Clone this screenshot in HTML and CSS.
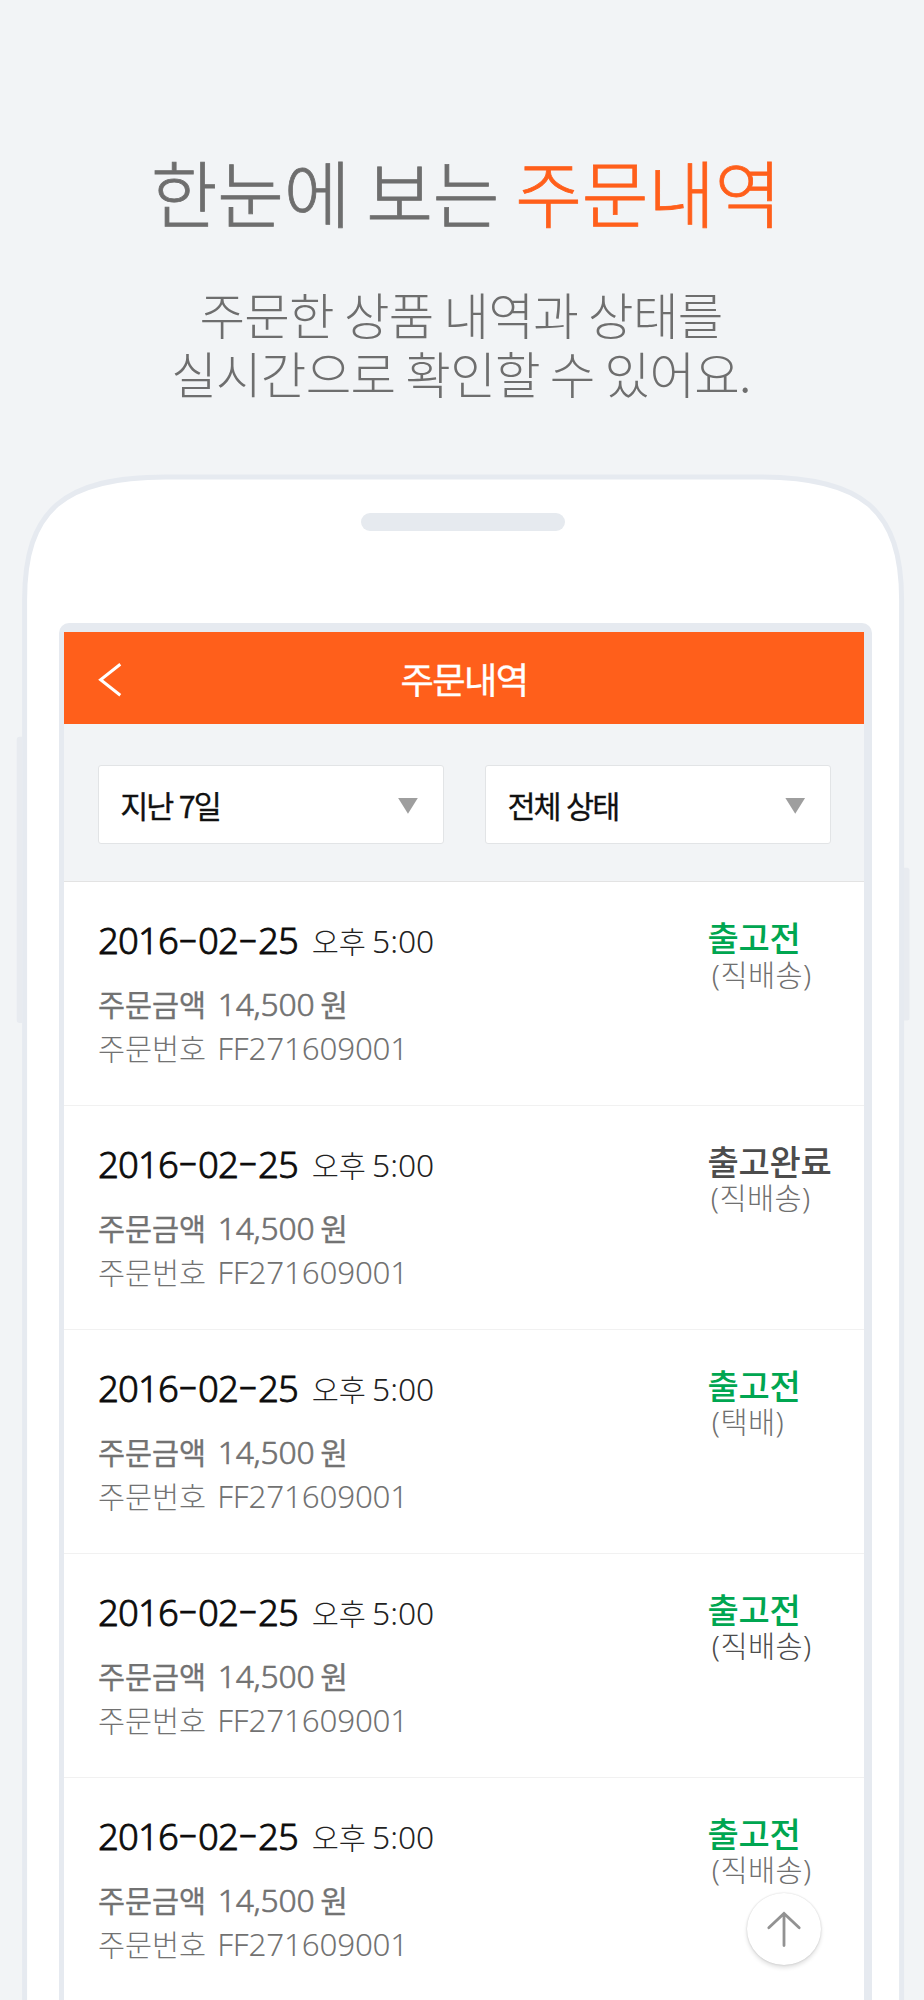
FILE: index.html
```
<!DOCTYPE html>
<html lang="ko">
<head>
<meta charset="utf-8">
<title>주문내역</title>
<link rel="stylesheet" href="styles.css">
</head>
<body>
<main class="page">
  <header class="intro">
    <h1 class="headline">한눈에 보는 <em>주문내역</em></h1>
    <p class="lead">주문한 상품 내역과 상태를<br>실시간으로 확인할 수 있어요.</p>
  </header>

  <section class="phone">
    <svg class="shell" viewBox="0 0 924 1526" width="924" height="1526" aria-hidden="true">
      <path class="side" d="M22 262.7h-2.3a3 3 0 0 0-3 3V546a3 3 0 0 0 3 3H22z"/>
      <path class="side" d="M904 393.7h3a2.5 2.5 0 0 1 2.5 2.5V544a2.5 2.5 0 0 1-2.5 2.5h-3z"/>
      <path class="body" d="M24.6 1540V126C24.6 36 64 2.9 166 2.9H760C862 2.9 901.6 36 901.6 126V1540"/>
    </svg>
    <div class="speaker"></div>
    <div class="screen">
      <nav class="bar">
        <svg class="back" viewBox="0 0 26 36" width="26" height="36"><path d="M23.3 3.2 3.6 18.7 23.3 34.2"/></svg>
        <h2 class="bar-title">주문내역</h2>
      </nav>
      <div class="filters">
        <div class="select"><span>지난 7일</span><i class="caret"></i></div>
        <div class="select"><span>전체 상태</span><i class="caret"></i></div>
      </div>
      <ul class="orders">
        <li class="order">
          <div class="info">
            <p class="when"><span class="date">2016<b>-</b>02<b>-</b>25</span><span class="ampm">오후</span><span class="time">5:00</span></p>
            <p class="amount"><span>주문금액</span><span class="sum">14,500</span><span class="won">원</span></p>
            <p class="number"><span>주문번호</span><span class="code">FF271609001</span></p>
          </div>
          <div class="status"><strong>출고전</strong><span>(직배송)</span></div>
        </li>
        <li class="order">
          <div class="info">
            <p class="when"><span class="date">2016<b>-</b>02<b>-</b>25</span><span class="ampm">오후</span><span class="time">5:00</span></p>
            <p class="amount"><span>주문금액</span><span class="sum">14,500</span><span class="won">원</span></p>
            <p class="number"><span>주문번호</span><span class="code">FF271609001</span></p>
          </div>
          <div class="status done"><strong>출고완료</strong><span>(직배송)</span></div>
        </li>
        <li class="order">
          <div class="info">
            <p class="when"><span class="date">2016<b>-</b>02<b>-</b>25</span><span class="ampm">오후</span><span class="time">5:00</span></p>
            <p class="amount"><span>주문금액</span><span class="sum">14,500</span><span class="won">원</span></p>
            <p class="number"><span>주문번호</span><span class="code">FF271609001</span></p>
          </div>
          <div class="status"><strong>출고전</strong><span>(택배)</span></div>
        </li>
        <li class="order">
          <div class="info">
            <p class="when"><span class="date">2016<b>-</b>02<b>-</b>25</span><span class="ampm">오후</span><span class="time">5:00</span></p>
            <p class="amount"><span>주문금액</span><span class="sum">14,500</span><span class="won">원</span></p>
            <p class="number"><span>주문번호</span><span class="code">FF271609001</span></p>
          </div>
          <div class="status dark"><strong>출고전</strong><span>(직배송)</span></div>
        </li>
        <li class="order">
          <div class="info">
            <p class="when"><span class="date">2016<b>-</b>02<b>-</b>25</span><span class="ampm">오후</span><span class="time">5:00</span></p>
            <p class="amount"><span>주문금액</span><span class="sum">14,500</span><span class="won">원</span></p>
            <p class="number"><span>주문번호</span><span class="code">FF271609001</span></p>
          </div>
          <div class="status"><strong>출고전</strong><span>(직배송)</span></div>
        </li>
      </ul>
    </div>
    <div class="to-top">
      <svg viewBox="0 0 36 38" width="36" height="38"><path d="M18 35.5V3.5M2.8 17.8 18 3.5 33.2 17.8"/></svg>
    </div>
  </section>
</main>
</body>
</html>
```
FILE: styles.css
```
* { box-sizing: border-box; margin: 0; padding: 0; }
body {
  background: #f2f4f6;
  font-family: "Noto Sans", "Noto Sans CJK KR", sans-serif;
}
.page {
  width: 924px;
  height: 2000px;
  overflow: hidden;
  display: flex;
  flex-direction: column;
}

.intro {
  height: 474px;
  padding-top: 151px;
  text-align: center;
  color: #6e6e6e;
  font-family: "Noto Sans CJK KR", sans-serif;
  font-weight: 300;
}
.headline {
  padding-left: 8px;
  font-size: 72.5px;
  line-height: 80px;
  font-weight: 300;
  letter-spacing: -0.2px;
  word-spacing: -4.2px;
  -webkit-text-stroke: 0.8px;
}
.headline em { font-style: normal; color: #ff5f1b; }
.lead {
  margin-top: 53px;
  padding-right: 2px;
  font-size: 49.5px;
  line-height: 59px;
  letter-spacing: -0.7px;
  word-spacing: -3.2px;
}

.phone {
  position: relative;
  height: 1526px;
  padding: 38.7px 52px 0 59px;
}
.shell { position: absolute; left: 0; top: 0; }
.shell .body { fill: #fff; stroke: #e6eaf0; stroke-width: 5; }
.shell .side { fill: #e8ebf0; }
.speaker {
  position: relative;
  width: 204px;
  height: 18px;
  margin-left: 302px;
  border-radius: 9px;
  background: #e6eaef;
}
.screen {
  position: relative;
  margin-top: 92.3px;
  padding: 9px 8px 0 5px;
  border-radius: 10px 10px 0 0;
  background: #e6eaf0;
}

.bar {
  display: grid;
  grid-template-columns: 62px 1fr 62px;
  align-items: center;
  height: 92.5px;
  background: #ff5f1b;
  color: #fff;
}
.back {
  margin: 1px 0 0 33px;
  fill: none;
  stroke: #fff;
  stroke-width: 3;
}
.bar-title {
  text-align: center;
  font-family: "Noto Sans CJK KR", sans-serif;
  font-size: 36.3px;
  line-height: 50px;
  font-weight: 400;
  letter-spacing: -1.7px;
  -webkit-text-stroke: 0.3px;
}

.filters {
  display: flex;
  gap: 41px;
  height: 157.5px;
  padding: 40.7px 32.8px 0 33.7px;
  background: #f2f4f6;
  border-bottom: 1px solid #e3e3e3;
}
.select {
  flex: 1;
  display: flex;
  align-items: center;
  justify-content: space-between;
  height: 79px;
  padding: 0 25px 0 21.5px;
  border: 1px solid #e2e4e6;
  border-radius: 3px;
  background: #fff;
  color: #111;
  font-family: "Noto Sans CJK KR", sans-serif;
  font-size: 30.5px;
  line-height: 44px;
  letter-spacing: -2px;
  -webkit-text-stroke: 0.3px;
}
.caret {
  width: 20px;
  height: 16px;
  margin-top: 2px;
  background: #9e9e9e;
  clip-path: polygon(0 0, 100% 0, 50% 100%);
}

.orders { list-style: none; background: #fff; }
.order {
  display: flex;
  justify-content: space-between;
  height: 223.9px;
  padding-left: 34px;
  border-bottom: 1px solid #f1f1f1;
}
.info { padding-top: 33.1px; }
.info p { display: flex; align-items: baseline; }
.when {
  height: 50px;
  font-size: 36.5px;
  line-height: 50px;
  color: #0c0c0c;
}
.date { font-weight: 300; letter-spacing: -0.85px; -webkit-text-stroke: 0.8px; }
.date b {
  position: relative;
  top: -3.5px;
  display: inline-block;
  width: 20px;
  font-weight: 300;
  text-align: center;
  letter-spacing: 0;
  transform: scaleX(1.6);
}
.ampm, .time { position: relative; top: -0.6px; font-weight: 300; line-height: 0; color: #222; }
.ampm { margin-left: 13.8px; font-size: 29.5px; }
.time { margin-left: 6px; font-size: 31.8px; }
.amount, .number { height: 44px; line-height: 44px; font-size: 29.4px; }
.amount { margin-top: 18.2px; color: #727272; -webkit-text-stroke: 0.3px; }
.number { font-weight: 300; color: #727272; }
.sum, .won, .code { line-height: 0; }
.sum { margin-left: 11.5px; font-size: 31.8px; font-weight: 300; letter-spacing: -0.2px; -webkit-text-stroke: 0.6px; }
.won { margin-left: 5.7px; font-size: 30px; }
.code { margin-left: 11px; font-size: 31.4px; letter-spacing: -0.2px; }

.status {
  display: flex;
  flex-direction: column;
  width: 156.5px;
  padding-top: 36px;
}
.status strong {
  font-size: 34px;
  line-height: 40px;
  font-weight: 500;
  letter-spacing: -0.3px;
  color: #00a651;
}
.status span {
  margin: -0.4px 0 0 4.3px;
  font-size: 29.5px;
  line-height: 34px;
  font-weight: 300;
  letter-spacing: 0.4px;
  color: #707070;
}
.status.done strong { color: #4c4c4c; }
.status.done span { margin-left: 3.3px; }
.status.dark span { color: #4c4c4c; }

/* floats over the list */
.to-top {
  position: absolute;
  left: 747.3px;
  top: 1418.5px;
  width: 74px;
  height: 72px;
  display: flex;
  align-items: center;
  justify-content: center;
  border-radius: 50%;
  background: #fff;
  box-shadow: 0 0 2px rgba(0, 0, 0, .18), 0 3px 4px rgba(0, 0, 0, .12);
}
.to-top svg { fill: none; stroke: #929292; stroke-width: 2.8; stroke-linecap: round; }
```
